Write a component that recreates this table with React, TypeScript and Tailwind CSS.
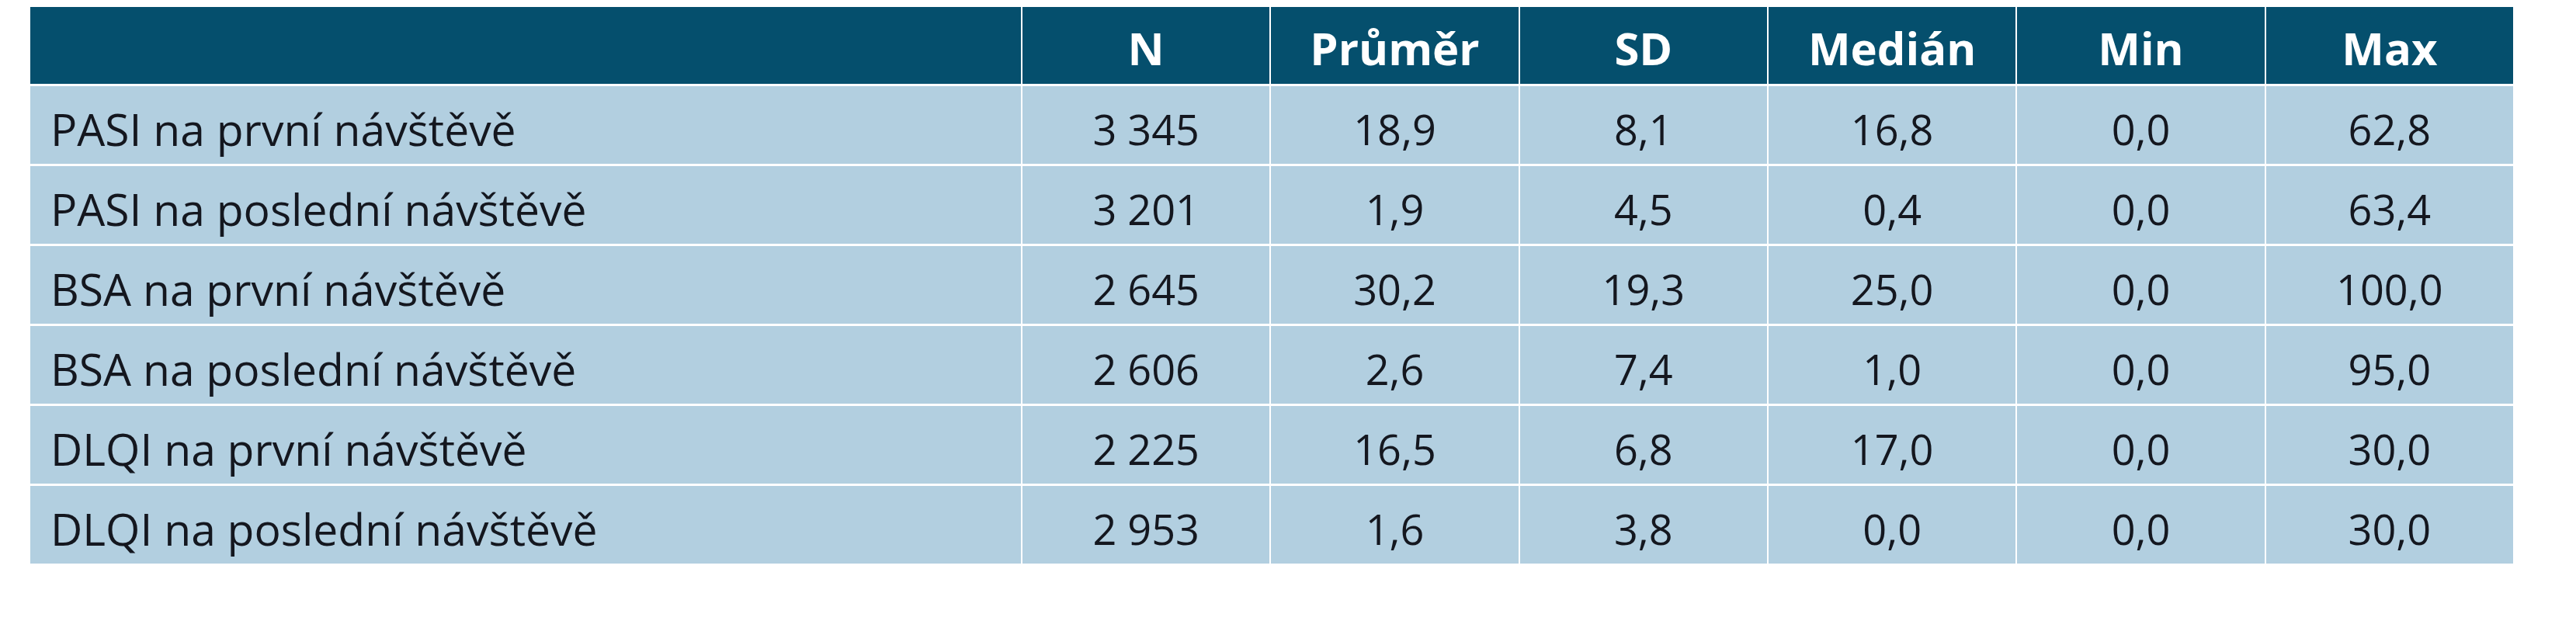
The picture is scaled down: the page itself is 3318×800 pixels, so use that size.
const columns = ['N', 'Průměr', 'SD', 'Medián', 'Min', 'Max'];

const rows: [string, string[]][] = [
  ['PASI na první návštěvě', ['3 345', '18,9', '8,1', '16,8', '0,0', '62,8']],
  ['PASI na poslední návštěvě', ['3 201', '1,9', '4,5', '0,4', '0,0', '63,4']],
  ['BSA na první návštěvě', ['2 645', '30,2', '19,3', '25,0', '0,0', '100,0']],
  ['BSA na poslední návštěvě', ['2 606', '2,6', '7,4', '1,0', '0,0', '95,0']],
  ['DLQI na první návštěvě', ['2 225', '16,5', '6,8', '17,0', '0,0', '30,0']],
  ['DLQI na poslední návštěvě', ['2 953', '1,6', '3,8', '0,0', '0,0', '30,0']],
];

const App = () => {
  return (
    <div className="w-[3318px] h-[800px] bg-white pt-[9px] pl-[39px] font-['Open_Sans',sans-serif]">
      <div className="grid w-[3198px] grid-cols-[1276px_repeat(6,1fr)] gap-x-[2px] gap-y-[3px]">
        {/* header row */}
        <div className="h-[99px] bg-[#054f6d]" />
        {columns.map((col) => (
          <div
            key={col}
            className="h-[99px] bg-[#054f6d] flex items-center justify-center pt-[6px] text-white font-bold text-[58px] leading-none"
          >
            {col}
          </div>
        ))}

        {rows.map(([label, values]) => (
          <div key={label} className="contents">
            <div className="h-[100px] bg-[#b2cfe0] flex items-center pl-[26px] pt-[10px] text-[57px] leading-none text-[#14171f]">
              {label}
            </div>
            {values.map((v, i) => (
              <div
                key={i}
                className="h-[100px] bg-[#b2cfe0] flex items-center justify-center pt-[10px] text-[54px] leading-none text-[#14171f]"
              >
                {v}
              </div>
            ))}
          </div>
        ))}
      </div>
    </div>
  );
};

export default App;
